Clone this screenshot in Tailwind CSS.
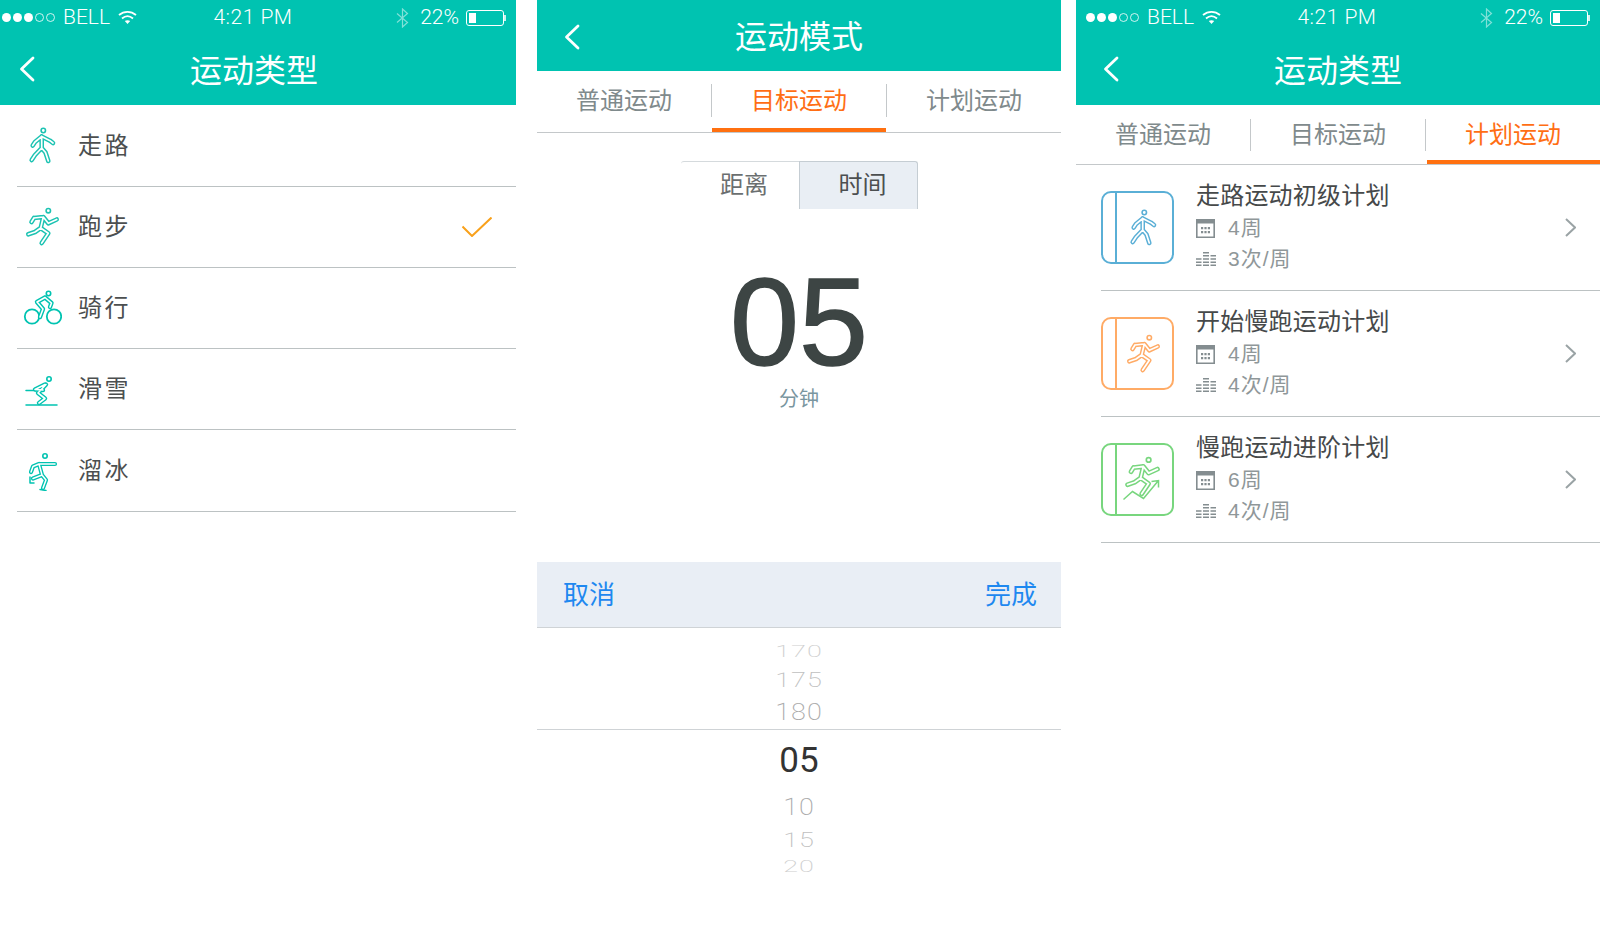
<!DOCTYPE html>
<html lang="zh-CN">
<head>
    <meta charset="UTF-8">
    <meta name="viewport" content="width=device-width, initial-scale=1.0">
    <title>运动类型</title>
    <script src="https://cdn.jsdelivr.net/npm/@tailwindcss/browser@4"></script>
</head>
<body class="bg-white font-['Liberation_Sans','Noto_Sans_CJK_SC',sans-serif]">

    <!-- figures: thick coloured stroke with a thin white stroke on top gives the hollow limbs -->
    <svg class="hidden" xmlns="http://www.w3.org/2000/svg">
        <symbol id="walk" viewBox="0 0 40 40">
            <g fill="none" stroke-linecap="round" stroke-linejoin="round">
                <circle cx="21.300" cy="4.500" r="2.200" stroke="currentColor" stroke-width="1.600"/>
                <path stroke="currentColor" stroke-width="4.600" d="M19.700 10.500 L13 16 L10.700 19.500 M19.700 10.500 L28 14.700 L31 17 M19.700 10.500 L19.700 22 L13 29 L9.700 34 M19.700 22 L23.500 26.500 L26.300 35"/>
                <path stroke="#fff" stroke-width="1.700" d="M19.700 10.500 L13 16 L10.700 19.500 M19.700 10.500 L28 14.700 L31 17 M19.700 10.500 L19.700 22 L13 29 L9.700 34 M19.700 22 L23.500 26.500 L26.300 35"/>
            </g>
        </symbol>
        <symbol id="run" viewBox="0 0 40 40">
            <g fill="none" stroke-linecap="round" stroke-linejoin="round">
                <circle cx="26.300" cy="3.700" r="2.200" stroke="currentColor" stroke-width="1.600"/>
                <path stroke="currentColor" stroke-width="4.600" d="M12 11 L21.300 10 L26.300 16.300 L34.700 12.500 M12 11 L9.500 15 M21.300 10 L18.700 21 L13 25 L6.300 27.300 M18.700 21 L26.300 26.300 L19.700 36"/>
                <path stroke="#fff" stroke-width="1.700" d="M12 11 L21.300 10 L26.300 16.300 L34.700 12.500 M12 11 L9.500 15 M21.300 10 L18.700 21 L13 25 L6.300 27.300 M18.700 21 L26.300 26.300 L19.700 36"/>
            </g>
        </symbol>
        <symbol id="bike" viewBox="0 0 40 40">
            <g fill="none" stroke-linecap="round" stroke-linejoin="round">
                <circle cx="26.500" cy="5.500" r="2.200" stroke="currentColor" stroke-width="1.600"/>
                <circle cx="10" cy="28.500" r="7.200" stroke="currentColor" stroke-width="1.800"/>
                <circle cx="32" cy="28.500" r="7.200" stroke="currentColor" stroke-width="1.800"/>
                <path stroke="currentColor" stroke-width="4.400" d="M23 9.500 L15 14 L21 21 L18 29 M23 9.500 L29.500 15 L28 19"/>
                <path stroke="#fff" stroke-width="1.600" d="M23 9.500 L15 14 L21 21 L18 29 M23 9.500 L29.500 15 L28 19"/>
            </g>
        </symbol>
        <symbol id="ski" viewBox="0 0 40 40">
            <g fill="none" stroke-linecap="round" stroke-linejoin="round">
                <circle cx="27" cy="10" r="2.200" stroke="currentColor" stroke-width="1.600"/>
                <path stroke="currentColor" stroke-width="1.500" d="M4 36 H35 M4 21.500 H14"/>
                <path stroke="currentColor" stroke-width="4.400" d="M24 15.500 L16 24 L23 29.500 L17 34 M23 15.500 L13 20.500 L21 21"/>
                <path stroke="#fff" stroke-width="1.600" d="M24 15.500 L16 24 L23 29.500 L17 34 M23 15.500 L13 20.500 L21 21"/>
            </g>
        </symbol>
        <symbol id="skate" viewBox="0 0 40 40">
            <g fill="none" stroke-linecap="round" stroke-linejoin="round">
                <circle cx="23" cy="5" r="2.200" stroke="currentColor" stroke-width="1.600"/>
                <path stroke="currentColor" stroke-width="1.500" d="M8 26 V32 H12 M18 38.500 L24 39.500"/>
                <path stroke="currentColor" stroke-width="4.200" d="M33 13 H17 L11 15.500 L9 21 M17 13 L20 24 L24 29 L21 37 M20 24 L11 27.500"/>
                <path stroke="#fff" stroke-width="1.500" d="M33 13 H17 L11 15.500 L9 21 M17 13 L20 24 L24 29 L21 37 M20 24 L11 27.500"/>
            </g>
        </symbol>
        <symbol id="calendar" viewBox="0 0 19 19">
            <path fill="none" stroke="currentColor" stroke-width="1.600" d="M.8.8 H18.200 V18.200 H.8 Z"/>
            <path fill="currentColor" d="M0 0 H19 V4.500 H0 Z M5 8 h2.200 v2.200 h-2.200 Z M8.400 8 h2.200 v2.200 h-2.200 Z M11.800 8 h2.200 v2.200 h-2.200 Z M5 12 h2.200 v2.200 h-2.200 Z M8.400 12 h2.200 v2.200 h-2.200 Z M11.800 12 h2.200 v2.200 h-2.200 Z"/>
        </symbol>
        <symbol id="bars" viewBox="0 0 20 14">
            <path fill="currentColor" d="M0 6.300 h5.500 v1.400 h-5.500 Z M0 9.600 h5.500 v1.400 h-5.500 Z M0 12.600 h5.500 v1.400 h-5.500 Z M7 0 h6 v1.400 h-6 Z M7 3.100 h6 v1.400 h-6 Z M7 6.300 h6 v1.400 h-6 Z M7 9.600 h6 v1.400 h-6 Z M7 12.600 h6 v1.400 h-6 Z M14.500 3.100 h5.500 v1.400 h-5.500 Z M14.500 6.300 h5.500 v1.400 h-5.500 Z M14.500 9.600 h5.500 v1.400 h-5.500 Z M14.500 12.600 h5.500 v1.400 h-5.500 Z"/>
        </symbol>
        <symbol id="back" viewBox="0 0 16 26">
            <path fill="none" stroke="#fff" stroke-width="2.800" stroke-linecap="round" stroke-linejoin="round" d="M14 2 L2.500 13 L14 24"/>
        </symbol>
    </svg>

    <div class="flex h-screen overflow-hidden bg-white">

        <!-- left phone, its first 8px are cut off by the picture -->
        <section class="w-[516px] shrink-0 overflow-hidden">
            <div class="w-[524px] -ml-2">
                <header class="h-[105px] bg-[#00c3b1] text-white">
                    <div class="h-[35px] flex items-center text-[21px] font-['Roboto','Noto_Sans_CJK_SC',sans-serif] font-light">
                        <div class="flex-1 flex items-center pl-[10px]">
                            <span class="w-[9px] h-[9px] rounded-full bg-white mr-[2px]"></span>
                            <span class="w-[9px] h-[9px] rounded-full bg-white mr-[2px]"></span>
                            <span class="w-[9px] h-[9px] rounded-full bg-white mr-[2px]"></span>
                            <span class="w-[9px] h-[9px] rounded-full border border-white/80 mr-[2px]"></span>
                            <span class="w-[9px] h-[9px] rounded-full border border-white/80"></span>
                            <span class="ml-[8px]">BELL</span>
                            <svg class="ml-[8px]" width="19" height="15" viewBox="0 0 19 14" fill="none" stroke="#fff" stroke-width="1.800"><path d="M1 4.500 C6 .3 13 .3 18 4.500 M4 8 C7.500 5 11.500 5 15 8"/><path d="M9.500 13.500 L6.800 10.600 C8.300 9.500 10.700 9.500 12.200 10.600 Z" fill="#fff" stroke="none"/></svg>
                        </div>
                        <div class="tracking-[0.5px] mr-[2px]">4:21 PM</div>
                        <div class="flex-1 flex items-center justify-end pr-[10px]">
                            <svg width="13" height="20" viewBox="0 0 13 20" fill="none" stroke="#fff" stroke-opacity=".5" stroke-width="1.200"><path d="M1 5.500 L11.500 14.500 L6.500 19 V1 L11.500 5.500 L1 14.500"/></svg>
                            <span class="ml-[11px] mr-[7px]">22%</span>
                            <div class="w-[38px] h-[16px] border border-white rounded-[3px] p-[2px]"><div class="w-[7px] h-full bg-white"></div></div>
                            <div class="w-[2px] h-[6px] bg-white/80"></div>
                        </div>
                    </div>
                    <div class="h-[70px] pt-[2px] grid grid-cols-[1fr_auto_1fr] items-center">
                        <svg class="ml-[27px] mb-[4px] w-[16px] h-[26px]"><use href="#back"/></svg>
                        <h1 class="text-[32px] font-normal">运动类型</h1>
                    </div>
                </header>
                <ul class="text-[24px] tracking-[2.500px] text-[#4c4f50]">
                    <li class="h-[82px] ml-[25px] border-b border-[#bcc2c3] flex items-center">
                        <svg class="ml-[5px] w-[40px] h-[40px] text-[#1cc3b2]"><use href="#walk"/></svg>
                        <span class="ml-[16px]">走路</span>
                    </li>
                    <li class="h-[81px] ml-[25px] border-b border-[#bcc2c3] flex items-center">
                        <svg class="ml-[5px] w-[40px] h-[40px] text-[#1cc3b2]"><use href="#run"/></svg>
                        <span class="ml-[16px]">跑步</span>
                        <svg class="ml-auto mr-[24px]" width="30" height="20" viewBox="0 0 30 20" fill="none" stroke="#f9a11b" stroke-width="2"><path d="M0.500 9.500 L10 19 L29.500 0.500"/></svg>
                    </li>
                    <li class="h-[81px] ml-[25px] border-b border-[#bcc2c3] flex items-center">
                        <svg class="ml-[5px] w-[40px] h-[40px] text-[#00c3b1]"><use href="#bike"/></svg>
                        <span class="ml-[16px]">骑行</span>
                    </li>
                    <li class="h-[81px] ml-[25px] border-b border-[#bcc2c3] flex items-center">
                        <svg class="ml-[5px] w-[40px] h-[40px] text-[#00c3b1]"><use href="#ski"/></svg>
                        <span class="ml-[16px]">滑雪</span>
                    </li>
                    <li class="h-[82px] ml-[25px] border-b border-[#bcc2c3] flex items-center">
                        <svg class="ml-[5px] w-[40px] h-[40px] text-[#00c3b1]"><use href="#skate"/></svg>
                        <span class="ml-[16px]">溜冰</span>
                    </li>
                </ul>
            </div>
        </section>

        <!-- middle phone -->
        <section class="w-[524px] shrink-0 ml-[21px]">
            <header class="h-[71px] pt-[3px] bg-[#00c3b1] text-white grid grid-cols-[1fr_auto_1fr] items-center">
                <svg class="ml-[27px] mb-[1px] w-[16px] h-[26px]"><use href="#back"/></svg>
                <h1 class="text-[32px] font-normal">运动模式</h1>
            </header>
            <div class="h-[62px] flex border-b border-[#c4c8ca] text-[24px] text-[#7f8a8c]">
                <div class="w-[174px] pt-[13px]"><div class="h-[33px] flex items-center justify-center">普通运动</div></div>
                <div class="w-[175px] pt-[13px] flex flex-col">
                    <div class="h-[33px] flex items-center justify-center border-l border-[#c4c8ca] text-[#ff6e14]">目标运动</div>
                    <div class="mt-auto h-[4px] ml-[1px] bg-[#ff7010]"></div>
                </div>
                <div class="w-[175px] pt-[13px]"><div class="h-[33px] flex items-center justify-center border-l border-[#c4c8ca]">计划运动</div></div>
            </div>

            <div class="mt-[28px] mx-auto w-[237px] h-[48px] flex text-[24px]">
                <div class="w-[118px] pl-[9px] pb-[2px] flex items-center justify-center border-t border-[#d5dadd] rounded-tl-[3px] text-[#6b6f70]">距离</div>
                <div class="w-[119px] pl-[9px] pb-[2px] flex items-center justify-center bg-[#e9eef4] border border-b-0 border-[#c5cdd3] rounded-tr-[3px] text-[#4c4f50]">时间</div>
            </div>
            <div class="mt-[51px] h-[124px] leading-[124px] text-[124px] text-center text-[#3d4544] [-webkit-text-stroke:1.500px_#3d4544]">05</div>
            <div class="h-[30px] leading-[30px] text-[20px] text-center text-[#7a96a0]">分钟</div>

            <div class="mt-[148px] h-[66px] pt-[2px] flex items-center justify-between pl-[26px] pr-[24px] bg-[#e9eef5] border-b border-[#cfd3d6] text-[26px] text-[#1e88f0]">
                <span>取消</span>
                <span>完成</span>
            </div>
            <div class="pt-[10px] flex flex-col items-center text-[27px] tracking-[1px] font-['Roboto',sans-serif] font-extralight">
                <div class="h-[28px] leading-[28px] text-[#cfcfcf] scale-y-[.6]">170</div>
                <div class="h-[29px] leading-[29px] text-[#c0c0c0] scale-y-[.72]">175</div>
                <div class="h-[34px] leading-[34px] text-[#aaa] scale-y-[.9]">180</div>
                <div class="h-[61px] pt-[3px] w-full border-t border-[#cfd3d6] flex items-center justify-center text-[35px] font-normal tracking-normal text-[#333]">05</div>
                <div class="h-[35px] leading-[35px] text-[#aaa] scale-y-[.9]">10</div>
                <div class="h-[30px] leading-[30px] text-[#c0c0c0] scale-y-[.76]">15</div>
                <div class="h-[24px] leading-[24px] text-[#cfcfcf] scale-y-[.6]">20</div>
            </div>
        </section>

        <!-- right phone -->
        <section class="w-[524px] shrink-0 ml-[15px]">
            <header class="h-[105px] bg-[#00c3b1] text-white">
                <div class="h-[35px] flex items-center text-[21px] font-['Roboto','Noto_Sans_CJK_SC',sans-serif] font-light">
                    <div class="flex-1 flex items-center pl-[10px]">
                        <span class="w-[9px] h-[9px] rounded-full bg-white mr-[2px]"></span>
                        <span class="w-[9px] h-[9px] rounded-full bg-white mr-[2px]"></span>
                        <span class="w-[9px] h-[9px] rounded-full bg-white mr-[2px]"></span>
                        <span class="w-[9px] h-[9px] rounded-full border border-white/80 mr-[2px]"></span>
                        <span class="w-[9px] h-[9px] rounded-full border border-white/80"></span>
                        <span class="ml-[8px]">BELL</span>
                        <svg class="ml-[8px]" width="19" height="15" viewBox="0 0 19 14" fill="none" stroke="#fff" stroke-width="1.800"><path d="M1 4.500 C6 .3 13 .3 18 4.500 M4 8 C7.500 5 11.500 5 15 8"/><path d="M9.500 13.500 L6.800 10.600 C8.300 9.500 10.700 9.500 12.200 10.600 Z" fill="#fff" stroke="none"/></svg>
                    </div>
                    <div class="tracking-[0.5px] mr-[2px]">4:21 PM</div>
                    <div class="flex-1 flex items-center justify-end pr-[10px]">
                        <svg width="13" height="20" viewBox="0 0 13 20" fill="none" stroke="#fff" stroke-opacity=".5" stroke-width="1.200"><path d="M1 5.500 L11.500 14.500 L6.500 19 V1 L11.500 5.500 L1 14.500"/></svg>
                        <span class="ml-[11px] mr-[7px]">22%</span>
                        <div class="w-[38px] h-[16px] border border-white rounded-[3px] p-[2px]"><div class="w-[7px] h-full bg-white"></div></div>
                        <div class="w-[2px] h-[6px] bg-white/80"></div>
                    </div>
                </div>
                <div class="h-[70px] pt-[2px] grid grid-cols-[1fr_auto_1fr] items-center">
                    <svg class="ml-[27px] mb-[4px] w-[16px] h-[26px]"><use href="#back"/></svg>
                    <h1 class="text-[32px] font-normal">运动类型</h1>
                </div>
            </header>
            <div class="h-[60px] flex border-b border-[#c4c8ca] text-[24px] text-[#7f8a8c]">
                <div class="w-[174px] pt-[14px]"><div class="h-[32px] flex items-center justify-center">普通运动</div></div>
                <div class="w-[175px] pt-[14px]"><div class="h-[32px] flex items-center justify-center border-l border-[#c4c8ca]">目标运动</div></div>
                <div class="w-[175px] pt-[14px] flex flex-col">
                    <div class="h-[32px] flex items-center justify-center border-l border-[#c4c8ca] text-[#ff6e14]">计划运动</div>
                    <div class="mt-auto h-[4px] bg-[#ff7010] ml-[2px]"></div>
                </div>
            </div>

            <ul>
                <li class="h-[126px] ml-[25px] border-b border-[#bcc2c3] flex items-center">
                    <div class="w-[73px] h-[73px] rounded-[10px] border-2 border-[#5aafd6] flex text-[#5aafd6]">
                        <div class="w-[14px] border-r-2 border-[#5aafd6]"></div>
                        <div class="flex-1 flex items-center justify-center"><svg class="mr-[3px] w-[40px] h-[40px]"><use href="#walk"/></svg></div>
                    </div>
                    <div class="ml-[22px] flex-1 pb-[1px]">
                        <div class="h-[30px] leading-[30px] text-[24px] tracking-[0.2px] text-[#46494a] mb-[2px] whitespace-nowrap">走路运动初级计划</div>
                        <div class="h-[30px] flex items-center text-[21px] tracking-[1px] text-[#8f9799]"><svg class="w-[19px] h-[19px] mr-[13px] text-[#848d90]"><use href="#calendar"/></svg>4周</div>
                        <div class="h-[30px] pt-[1px] flex items-center text-[21px] tracking-[1px] text-[#8f9799]"><svg class="w-[20px] h-[14px] mr-[12px] text-[#848d90]"><use href="#bars"/></svg>3次/周</div>
                    </div>
                    <svg class="mr-[24px]" width="11" height="19" viewBox="0 0 11 19" fill="none" stroke="#9aa3a5" stroke-width="2"><path d="M1 1 L10 9.500 L1 18"/></svg>
                </li>
                <li class="h-[126px] ml-[25px] border-b border-[#bcc2c3] flex items-center">
                    <div class="w-[73px] h-[73px] rounded-[10px] border-2 border-[#ffab66] flex text-[#ffab66]">
                        <div class="w-[14px] border-r-2 border-[#ffab66]"></div>
                        <div class="flex-1 flex items-center justify-center"><svg class="mr-[3px] w-[40px] h-[40px]"><use href="#run"/></svg></div>
                    </div>
                    <div class="ml-[22px] flex-1 pb-[1px]">
                        <div class="h-[30px] leading-[30px] text-[24px] tracking-[0.2px] text-[#46494a] mb-[2px] whitespace-nowrap">开始慢跑运动计划</div>
                        <div class="h-[30px] flex items-center text-[21px] tracking-[1px] text-[#8f9799]"><svg class="w-[19px] h-[19px] mr-[13px] text-[#848d90]"><use href="#calendar"/></svg>4周</div>
                        <div class="h-[30px] pt-[1px] flex items-center text-[21px] tracking-[1px] text-[#8f9799]"><svg class="w-[20px] h-[14px] mr-[12px] text-[#848d90]"><use href="#bars"/></svg>4次/周</div>
                    </div>
                    <svg class="mr-[24px]" width="11" height="19" viewBox="0 0 11 19" fill="none" stroke="#9aa3a5" stroke-width="2"><path d="M1 1 L10 9.500 L1 18"/></svg>
                </li>
                <li class="h-[126px] ml-[25px] border-b border-[#bcc2c3] flex items-center">
                    <div class="w-[73px] h-[73px] rounded-[10px] border-2 border-[#78d67e] flex text-[#78d67e]">
                        <div class="w-[14px] border-r-2 border-[#78d67e]"></div>
                        <div class="flex-1 flex items-center justify-center">
                            <svg width="46" height="50" viewBox="0 0 46 50">
                                <use href="#run" x="-1" y="1" width="42" height="42"/>
                                <path fill="none" stroke="currentColor" stroke-width="1.500" d="M1.500 44.500 L10.500 36.500 L21.500 43.500 L36.500 25.500 M29.500 26.500 L36.500 25.500 V32.500"/>
                            </svg>
                        </div>
                    </div>
                    <div class="ml-[22px] flex-1 pb-[1px]">
                        <div class="h-[30px] leading-[30px] text-[24px] tracking-[0.2px] text-[#46494a] mb-[2px] whitespace-nowrap">慢跑运动进阶计划</div>
                        <div class="h-[30px] flex items-center text-[21px] tracking-[1px] text-[#8f9799]"><svg class="w-[19px] h-[19px] mr-[13px] text-[#848d90]"><use href="#calendar"/></svg>6周</div>
                        <div class="h-[30px] pt-[1px] flex items-center text-[21px] tracking-[1px] text-[#8f9799]"><svg class="w-[20px] h-[14px] mr-[12px] text-[#848d90]"><use href="#bars"/></svg>4次/周</div>
                    </div>
                    <svg class="mr-[24px]" width="11" height="19" viewBox="0 0 11 19" fill="none" stroke="#9aa3a5" stroke-width="2"><path d="M1 1 L10 9.500 L1 18"/></svg>
                </li>
            </ul>
        </section>
    </div>
</body>
</html>
